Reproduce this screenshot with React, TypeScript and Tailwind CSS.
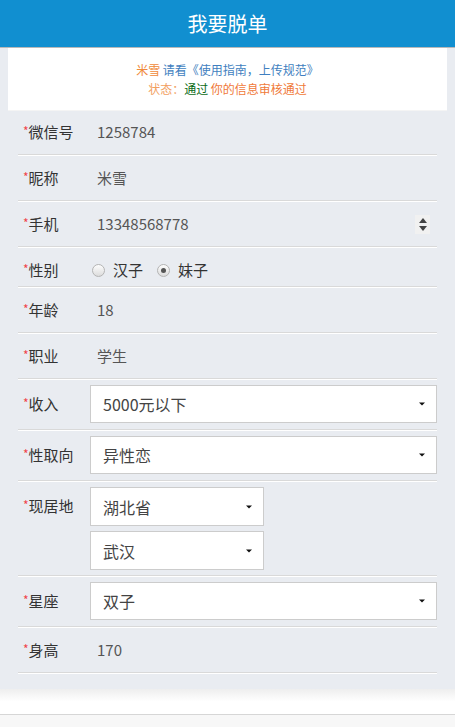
import React from "react"

const font = { fontFamily: '"Noto Sans CJK SC", "Noto Sans", sans-serif' }

function Label({ text, lh = "leading-[44px]" }: { text: string; lh?: string }) {
  return (
    <div className={`w-[72px] shrink-0 pl-[5px] text-[15px] text-[#333] ${lh}`}>
      <span className="relative -top-[2px] text-[12px] text-[#f0434a]">*</span>
      {text}
    </div>
  )
}

function Row({ children, className = "" }: { children: React.ReactNode; className?: string }) {
  return (
    <div className={`mb-px flex border-b border-[#d9d9d9] shadow-[0_1px_0_#ffffff] ${className}`}>
      {children}
    </div>
  )
}

function TextRow({ label, value, extra }: { label: string; value: string; extra?: React.ReactNode }) {
  return (
    <Row className="h-[45px] items-start">
      <Label text={label} />
      <div className="flex h-[44px] flex-1 items-center justify-between pl-[7px] pr-[7px] text-[15px] text-[#555]">
        <span>{value}</span>
        {extra}
      </div>
    </Row>
  )
}

function Caret() {
  return (
    <svg width="6" height="4" viewBox="0 0 6 4" className="shrink-0">
      <path d="M0 0.5h6L3 3.5z" fill="#111" />
    </svg>
  )
}

function Select({ value, className = "" }: { value: string; className?: string }) {
  return (
    <div
      className={`flex h-[38px] items-center justify-between border border-[#cccccc] bg-white pl-3 pr-[11px] text-[16px] text-[#444] ${className}`}
    >
      <span>{value}</span>
      <Caret />
    </div>
  )
}

function SelectRow({ label, value }: { label: string; value: string }) {
  return (
    <Row className="items-start py-[5px]">
      <Label text={label} lh="leading-[38px]" />
      <Select value={value} className="flex-1" />
    </Row>
  )
}

function Radio({ checked, label }: { checked?: boolean; label: string }) {
  return (
    <label className="flex items-center gap-[8px] text-[15px] text-[#333]">
      <span className="flex h-[13px] w-[13px] items-center justify-center rounded-full border border-[#b4b4b4] bg-gradient-to-b from-[#fdfdfd] to-[#dcdcdc]">
        {checked && <span className="h-[5px] w-[5px] rounded-full bg-[#555]" />}
      </span>
      {label}
    </label>
  )
}

function Spinner() {
  return (
    <div className="flex h-[19px] w-[15px] flex-col items-center justify-center gap-[3px] bg-[#f1f1f1]">
      <svg width="8" height="5" viewBox="0 0 8 5">
        <path d="M0 5L4 0l4 5z" fill="#444" />
      </svg>
      <svg width="8" height="5" viewBox="0 0 8 5">
        <path d="M0 0h8L4 5z" fill="#444" />
      </svg>
    </div>
  )
}

export default function App() {
  return (
    <div className="flex h-[727px] flex-col overflow-hidden bg-[#e9ecf1]" style={font}>
      <header className="flex h-[48px] shrink-0 items-center justify-center border-b border-[#b9b9b9] bg-[#118fd0] text-[20px] text-white">
        我要脱单
      </header>

      <div className="px-2">
        <div className="flex h-[62px] flex-col items-center justify-center bg-white text-[12px] leading-[19px] shadow-[0_1px_0_#f4f4f4]">
          <p>
            <span className="text-[#f08a3a]">米雪</span>{" "}
            <span className="text-[#3f7fc0]">请看《使用指南，上传规范》</span>
          </p>
          <p>
            <span className="text-[#f2a060]">状态：</span>
            <span className="text-[#0b6b16]">通过</span>{" "}
            <span className="text-[#f07a3a]">你的信息审核通过</span>
          </p>
        </div>

        <form className="px-[10px]">
          <TextRow label="微信号" value="1258784" />
          <TextRow label="昵称" value="米雪" />
          <TextRow label="手机" value="13348568778" extra={<Spinner />} />

          <Row className="h-[39px] items-start pt-[3px]">
            <Label text="性别" lh="leading-[38px]" />
            <div className="flex h-[38px] items-center gap-[14px] pl-[2px]">
              <Radio label="汉子" />
              <Radio label="妹子" checked />
            </div>
          </Row>

          <TextRow label="年龄" value="18" />
          <TextRow label="职业" value="学生" />
          <SelectRow label="收入" value="5000元以下" />
          <SelectRow label="性取向" value="异性恋" />

          <Row className="items-start py-[5px]">
            <Label text="现居地" lh="leading-[38px]" />
            <div className="flex flex-col gap-[5px]">
              <Select value="湖北省" className="h-[39px] w-[174px]" />
              <Select value="武汉" className="h-[39px] w-[174px]" />
            </div>
          </Row>

          <SelectRow label="星座" value="双子" />
          <TextRow label="身高" value="170" />
        </form>
      </div>

      <div className="mt-[15px] h-[26px] shrink-0 border-b border-[#d6d6d6] bg-gradient-to-b from-[#eeeeee] via-white to-white" />
      <div className="flex-1 bg-[#f7f7f7]" />
    </div>
  )
}
